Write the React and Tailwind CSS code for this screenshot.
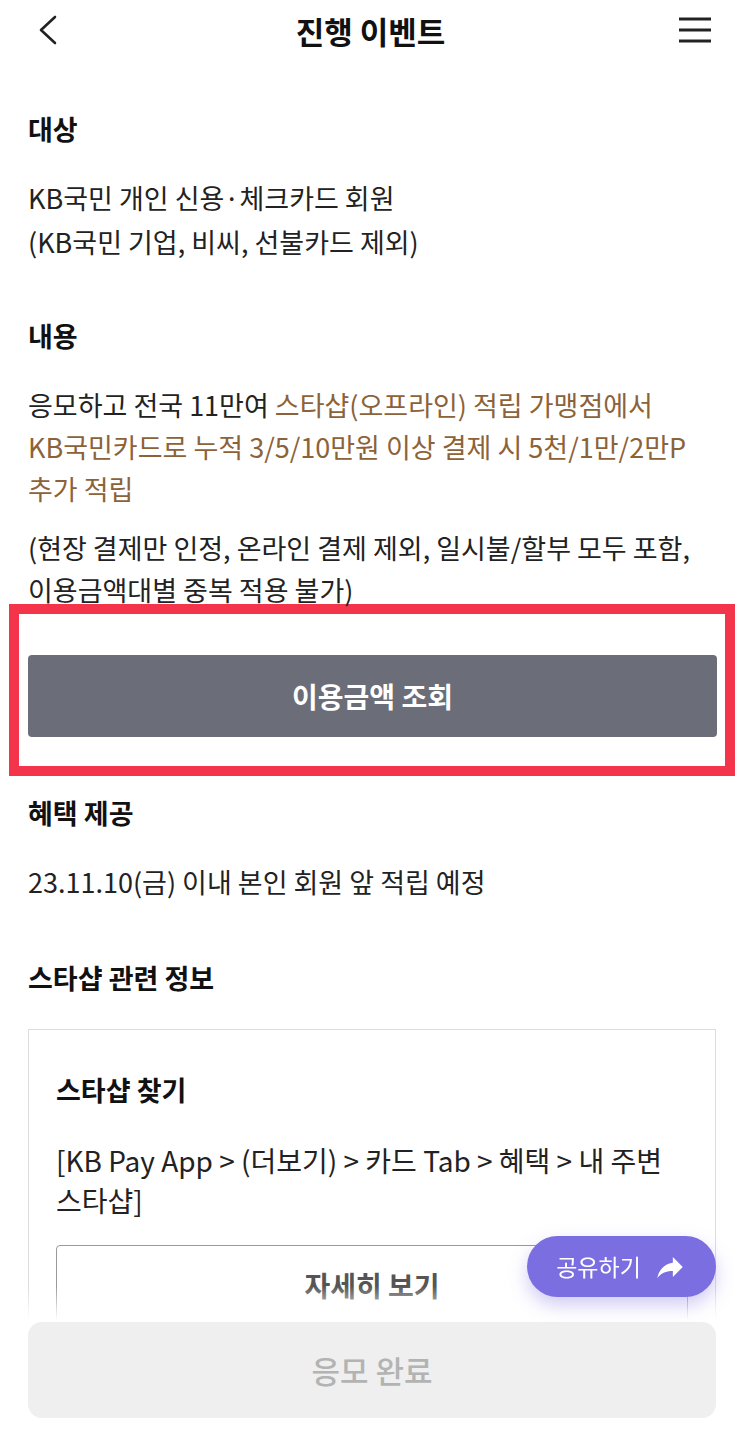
import { useState } from 'react';

const font = { fontFamily: '"Noto Sans CJK KR", "Noto Sans", sans-serif' };

function BackIcon() {
  return (
    <svg width="22" height="30" viewBox="0 0 22 30" fill="none" stroke="#222" strokeWidth="2.6" strokeLinecap="round" strokeLinejoin="round">
      <polyline points="17,2 3,15 17,28" />
    </svg>
  );
}

function MenuIcon() {
  return (
    <svg width="32" height="26" viewBox="0 0 32 26" fill="none" stroke="#222" strokeWidth="3">
      <line x1="0" y1="2" x2="32" y2="2" />
      <line x1="0" y1="13" x2="32" y2="13" />
      <line x1="0" y1="24" x2="32" y2="24" />
    </svg>
  );
}

function ShareIcon() {
  return (
    <svg width="34" height="34" viewBox="0 0 24 24" fill="white">
      <path d="M14 9V5l7 7-7 7v-4.1c-5 0-8.5 1.6-11 5.1 1-5 4-10 11-11z" />
    </svg>
  );
}

export default function App() {
  const [applied] = useState(true);

  return (
    <div className="min-h-screen bg-white text-[#222] pb-[160px]" style={font}>
      <header className="h-[60px] flex items-center justify-between pl-[38px] pr-[33px]">
        <button className="w-[24px] h-[30px] flex items-center">
          <BackIcon />
        </button>
        <h1 className="text-[31px] font-bold text-[#111] leading-none">진행 이벤트</h1>
        <button className="flex items-center">
          <MenuIcon />
        </button>
      </header>

      <main className="px-[28px]">
        <h2 className="mt-[51px] text-[27px] font-bold leading-[36px] text-[#111]">대상</h2>
        <p className="mt-[29px] text-[27px] leading-[44px]">
          KB국민 개인 신용·체크카드 회원
          <br />
          (KB국민 기업, 비씨, 선불카드 제외)
        </p>

        <h2 className="mt-[54px] text-[27px] font-bold leading-[36px] text-[#111]">내용</h2>
        <p className="mt-[30px] text-[27px] leading-[42px] whitespace-nowrap">
          응모하고 전국 11만여 <span className="text-[#8c6239]">스타샵(오프라인) 적립 가맹점에서</span>
          <br />
          <span className="text-[#8c6239]">KB국민카드로 누적 3/5/10만원 이상 결제 시 5천/1만/2만P</span>
          <br />
          <span className="text-[#8c6239]">추가 적립</span>
        </p>
        <p className="mt-[17px] text-[27px] leading-[42px] whitespace-nowrap">
          (현장 결제만 인정, 온라인 결제 제외, 일시불/할부 모두 포함,
          <br />
          이용금액대별 중복 적용 불가)
        </p>

        <div className="-mt-[7px] -mx-[19px] border-[10px] border-[#f4344b] pt-[41px] pb-[29px] pl-[9px] pr-[8px]">
          <button className="w-full h-[82px] rounded-[4px] bg-[#6b6e78] text-white text-[28px] font-bold">
            이용금액 조회
          </button>
        </div>

        <h2 className="mt-[19px] text-[27px] font-bold leading-[36px] text-[#111]">혜택 제공</h2>
        <p className="mt-[29px] text-[27px] leading-[44px]">23.11.10(금) 이내 본인 회원 앞 적립 예정</p>

        <h2 className="mt-[56px] text-[27px] font-bold leading-[36px] text-[#111]">스타샵 관련 정보</h2>

        <div className="mt-[33px] border border-[#dcdcdc] px-[27px] pt-[42px] pb-[40px]">
          <h3 className="text-[27px] font-bold leading-[36px] text-[#111]">스타샵 찾기</h3>
          <p className="mt-[32px] text-[28px] leading-[40px] whitespace-nowrap">
            [KB Pay App &gt; (더보기) &gt; 카드 Tab &gt; 혜택 &gt; 내 주변
            <br />
            스타샵]
          </p>
          <button className="mt-[25px] w-full h-[80px] border border-[#9a9a9a] rounded-[4px] text-[28px] font-bold text-[#555]">
            자세히 보기
          </button>
        </div>
      </main>

      <button className="fixed right-[28px] bottom-[143px] z-20 w-[189px] h-[61px] rounded-full bg-[#7b6ee0] flex items-center justify-center gap-[12px] shadow-[0_8px_18px_rgba(123,110,224,0.35)]">
        <span className="text-white text-[23px]">공유하기</span>
        <ShareIcon />
      </button>

      <div className="fixed inset-x-0 bottom-0 z-10">
        <div className="h-[34px] bg-gradient-to-b from-white/0 to-white" />
        <div className="bg-white px-[28px] pt-[2px] pb-[22px]">
          <button
            disabled={applied}
            className="w-full h-[96px] rounded-[14px] bg-[#efefef] text-[#b3b3b3] text-[31px] font-medium"
          >
            응모 완료
          </button>
        </div>
      </div>
    </div>
  );
}
